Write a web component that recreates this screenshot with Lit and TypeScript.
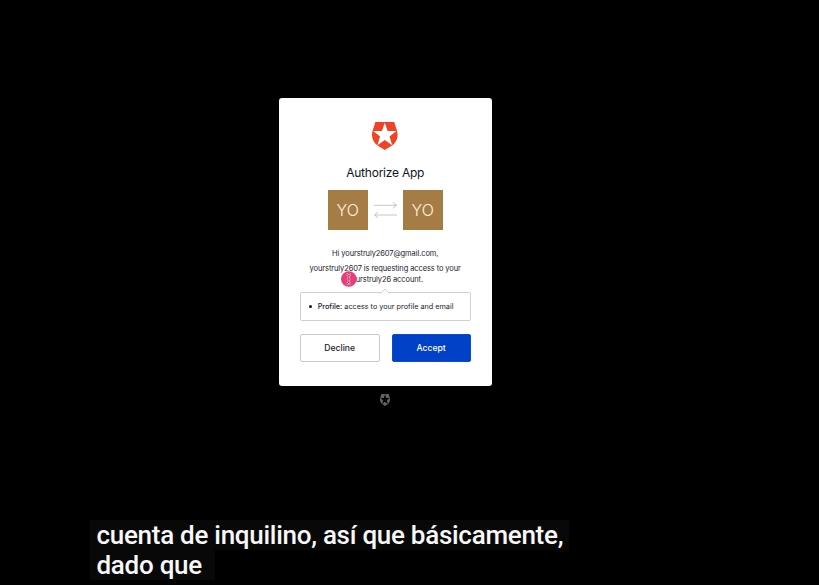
import { LitElement, html, css, svg } from "lit";
import { customElement, property } from "lit/decorators.js";

@customElement("brand-shield")
class BrandShield extends LitElement {
  static styles = css`
    :host { display: block; }
    svg { display: block; width: 100%; height: 100%; }
    .red { fill: #ec4425; }
    .gray { fill: #626262; }
  `;
  @property() tone = "red";
  render() {
    const body = svg`<path class=${this.tone} fill-rule="evenodd" d="M3.4 0H22.6L25.4 8.8C27.2 15.2 24.8 20.4 20.4 23.4L13 28L5.6 23.4C1.2 20.4 -1.2 15.2 .6 8.8Z
      M13 .8L10.1 9.1H1.2L8.2 14.5L5.5 23.2L13 18L20.5 23.2L17.8 14.5L24.8 9.1H15.9Z"/>`;
    return html`<svg viewBox="0 0 26 28" preserveAspectRatio="none">${body}</svg>`;
  }
}

@customElement("app-root")
class AppRoot extends LitElement {
  static styles = css`
    :host {
      display: flex; flex-direction: column; position: relative;
      width: 819px; height: 585px; overflow: hidden; box-sizing: border-box;
      background: #000; color: #1e212a; padding-top: 98px;
      font-family: Inter, "Liberation Sans", sans-serif;
    }
    .card {
      box-sizing: border-box; width: 213.4px; height: 288px; margin-left: 278.5px;
      padding: 24px 21.2px 0; background: #fff; border-radius: 3px;
      display: flex; flex-direction: column; align-items: center;
      flex: none;
    }
    .logo { width: 25.6px; height: 28px; flex: none; }
    h1 { margin: 15px 0 0; font-size: 12px; line-height: 16px; font-weight: 400; letter-spacing: -.23px; white-space: nowrap; color: #111318; }
    .apps { display: flex; align-items: center; margin-top: 9.4px; gap: 6px; height: 40px; flex: none; }
    .tile {
      width: 40px; height: 40px; background: #a67c45; color: #fff4e3;
      font-size: 16px; line-height: 41px; text-align: center; font-weight: 350;
    }
    .arrows { width: 23px; height: 16px; fill: none; stroke: #b8b8b8; stroke-width: .8; }
    p { margin: 0; font-size: 7.5px; letter-spacing: -.1px; text-align: center; white-space: nowrap; }
    .hello { margin-top: 17.8px; line-height: 11px; }
    .request { margin-top: 4px; line-height: 11px; }
    .scope {
      position: relative; box-sizing: border-box; width: 171px; height: 29px; margin-top: 6.8px;
      border: 1px solid #cfcfd1; border-radius: 2px; display: flex; align-items: center; flex: none;
      padding-left: 8px; font-size: 7.25px; white-space: nowrap;
    }
    .scope b { font-weight: 500; }
    .dot { width: 3.4px; height: 3.4px; border-radius: 50%; background: #111; margin-right: 5.6px; }
    .notch { position: absolute; left: 79.5px; top: -5px; width: 10px; height: 6px; fill: #fff; stroke: #cfcfd1; stroke-width: 1; }
    .buttons { display: flex; width: 171px; justify-content: space-between; margin-top: 12.8px; }
    button {
      box-sizing: border-box; height: 28px; padding: 0; font: 450 8.6px/26px Inter, sans-serif;
      border-radius: 2px; border: 1px solid #c9cace; background: #fff; color: #1e212a;
    }
    .decline { width: 80px; }
    .accept { width: 79px; background: #0041c7; border-color: #0b4bd0; color: #fff; }
    .badge { width: 10px; height: 12px; margin: 8px 0 0 380px; flex: none; }
    .cursor { position: absolute; left: 341px; top: 271px; width: 16px; height: 16px; }
    .caption {
      margin: 114px 0 0 90px; display: flex; flex-direction: column; align-items: flex-start;
      font: 500 26px/30px Roboto, sans-serif; letter-spacing: -.28px; color: #f8f8f8; white-space: nowrap;
    }
    .caption span { background: #080808; padding-left: 6.5px; box-sizing: border-box; height: 30px; }
    .first { width: 479px; }
    .second { width: 125px; }
  `;
  render() {
    return html`
      <main class="card">
        <brand-shield class="logo"></brand-shield>
        <h1>Authorize App</h1>
        <div class="apps">
          <div class="tile">YO</div>
          <svg class="arrows" viewBox="0 0 23 16"><path d="M0 3.3H22.5M18.8 .3L22.5 3.3L18.8 6.3M23 13H.5M4.2 10L.5 13L4.2 16"/></svg>
          <div class="tile">YO</div>
        </div>
        <p class="hello">Hi yourstruly2607@gmail.com,</p>
        <p class="request">yourstruly2607 is requesting access to your<br>yourstruly26 account.</p>
        <div class="scope">
          <svg class="notch" viewBox="0 0 10 6"><path d="M.5 5.5L5 1L9.5 5.5"/></svg>
          <i class="dot"></i><span><b>Profile:</b> access to your profile and email</span>
        </div>
        <div class="buttons">
          <button class="decline">Decline</button>
          <button class="accept">Accept</button>
        </div>
      </main>
      <brand-shield class="badge" tone="gray"></brand-shield>
      <svg class="cursor" viewBox="0 0 16 16">
        <circle cx="7.8" cy="8" r="7.8" fill="#ed3b79"/>
        <path d="M5.7 3.6Q7.8 3.6 7.8 5V11Q7.8 12.5 5.7 12.5M9.9 3.6Q7.8 3.6 7.8 5M7.8 11Q7.8 12.5 9.9 12.5M6.3 8H9.3" fill="none" stroke="#f9c9da" stroke-width="2.2"/>
        <path d="M5.9 3.6Q7.8 3.6 7.8 5V11Q7.8 12.5 5.9 12.5M9.7 3.6Q7.8 3.6 7.8 5M7.8 11Q7.8 12.5 9.7 12.5M6.5 8H9.1" fill="none" stroke="#8f2850" stroke-width=".8"/>
      </svg>
      <div class="caption">
        <span class="first">cuenta de inquilino, así que básicamente,</span>
        <span class="second">dado que</span>
      </div>
    `;
  }
}
